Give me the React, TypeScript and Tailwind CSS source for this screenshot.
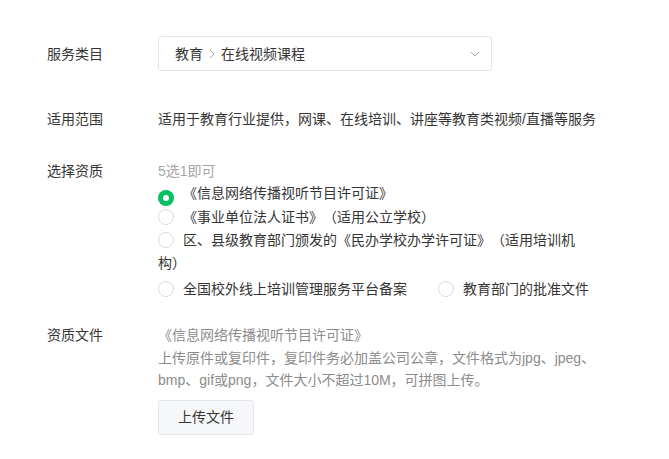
import React from 'react';

const font = { fontFamily: '"Liberation Sans", "Noto Sans CJK SC", sans-serif' };

function Radio({ checked = false }: { checked?: boolean }) {
  return checked ? (
    <span className="inline-flex w-4 h-4 rounded-full bg-[#07c160] items-center justify-center align-[-3px]">
      <span className="w-[6px] h-[6px] rounded-full bg-white" />
    </span>
  ) : (
    <span className="inline-block w-4 h-4 rounded-full border border-[#dcdcdc] bg-white align-[-3px]" />
  );
}

function FormRow({ label, children, className = '' }: { label: string; children: React.ReactNode; className?: string }) {
  return (
    <div className={`flex ${className}`}>
      <div className="w-[111px] shrink-0 text-sm leading-[22px] text-[#353535]">{label}</div>
      <div className="w-[442px]">{children}</div>
    </div>
  );
}

export default function App() {
  const options = [
    '《信息网络传播视听节目许可证》',
    '《事业单位法人证书》（适用公立学校）',
    '区、县级教育部门颁发的《民办学校办学许可证》（适用培训机构）',
  ];

  return (
    <div className="w-[669px] h-[459px] bg-white pl-[47px] pt-[36px] text-sm [text-spacing-trim:space-all]" style={font}>
      {/* 服务类目 */}
      <div className="flex items-center">
        <div className="w-[111px] shrink-0 text-sm text-[#353535]">服务类目</div>
        <div className="w-[334px] h-[35px] border border-[#e4e6eb] rounded-[3px] flex items-center justify-between pl-4 pr-[11px]">
          <div className="flex items-center text-[#353535]">
            <span>教育</span>
            <svg width="6" height="10" viewBox="0 0 6 10" className="mx-[6px]">
              <path d="M1 1l4 4-4 4" fill="none" stroke="#a3a3a3" strokeWidth="1" />
            </svg>
            <span>在线视频课程</span>
          </div>
          <svg width="10" height="6" viewBox="0 0 10 6">
            <path d="M1 1l4 4 4-4" fill="none" stroke="#a8a8a8" strokeWidth="1" />
          </svg>
        </div>
      </div>

      {/* 适用范围 */}
      <FormRow label="适用范围" className="mt-[37px]">
        <div className="leading-[22px] text-[#353535] whitespace-nowrap">
          适用于教育行业提供，网课、在线培训、讲座等教育类视频/直播等服务
        </div>
      </FormRow>

      {/* 选择资质 */}
      <FormRow label="选择资质" className="mt-[30px]">
        <div className="leading-[22px] text-[#a6a6a6]">5选1即可</div>
        {options.map((text, i) => (
          <div key={text} className="leading-[23px] text-[#353535]">
            <Radio checked={i === 0} />
            <span className="ml-[9px]">{text}</span>
          </div>
        ))}
        <div className="leading-[23px] text-[#353535] mt-[3px] whitespace-nowrap">
          <Radio />
          <span className="ml-[9px]">全国校外线上培训管理服务平台备案</span>
          <span className="ml-[31px]">
            <Radio />
            <span className="ml-[9px]">教育部门的批准文件</span>
          </span>
        </div>
      </FormRow>

      {/* 资质文件 */}
      <FormRow label="资质文件" className="mt-[23px]">
        <div className="leading-[22.5px] text-[#8c8c8c]">
          <div>《信息网络传播视听节目许可证》</div>
          <div>上传原件或复印件，复印件务必加盖公司公章，文件格式为jpg、jpeg、bmp、gif或png，文件大小不超过10M，可拼图上传。</div>
        </div>
        <button className="mt-[8px] w-[96px] h-[35px] rounded-[3px] border border-[#e4e6eb] bg-[#f6f7f8] text-[#353535] text-sm">
          上传文件
        </button>
      </FormRow>
    </div>
  );
}
